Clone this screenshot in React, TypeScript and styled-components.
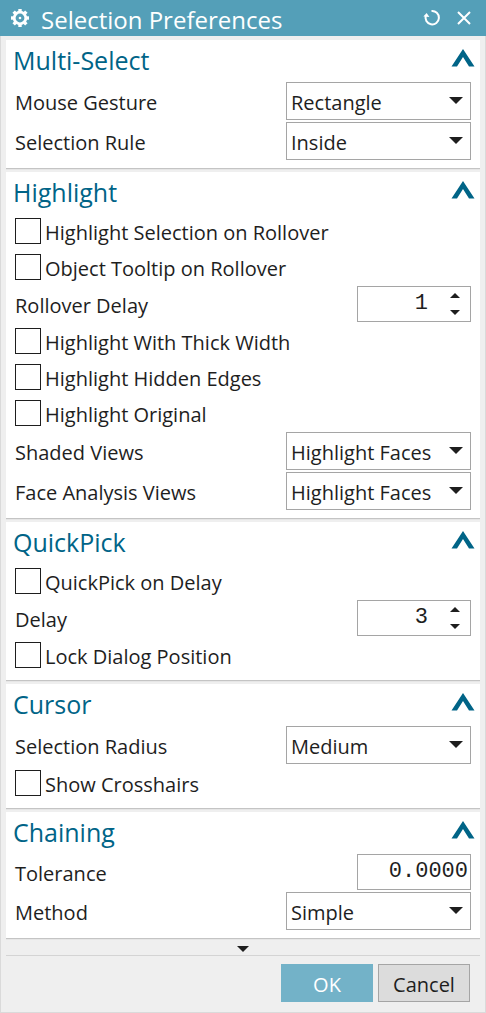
import React, { useId, useState } from "react";
import styled, { createGlobalStyle } from "styled-components";

const GlobalStyle = createGlobalStyle`
  *, *::before, *::after { box-sizing: border-box; }
  body {
    margin: 0;
    background: #efefef;
    color: #1e1e1e;
    font-family: "Open Sans", "Noto Sans", sans-serif;
    font-size: 20px;
  }
  button, input, select { font: inherit; color: inherit; margin: 0; }
`;

const Dialog = styled.main`
  min-height: 100vh;
  background: #efefef;
  display: flex;
  flex-direction: column;
`;

const TitleBar = styled.header`
  display: flex;
  align-items: center;
  height: 36px;
  padding: 0 15px 0 10px;
  background: #549fb8;
  color: #fff;
`;

const Title = styled.h1`
  flex: 1;
  margin: 0;
  padding: 3px 0 0 11px;
  font-size: 24px;
  line-height: 32px;
  font-weight: 400;
  white-space: nowrap;
`;

const IconButton = styled.button`
  display: flex;
  padding: 0;
  border: 0;
  background: none;
  color: inherit;
  & + & { margin-left: 16px; }
`;

const Body = styled.div`
  flex: 1;
  display: flex;
  flex-direction: column;
  padding: 4px 5px 10px;
  border: 1px solid #dadada;
  border-top: 0;
`;

const Sections = styled.div`
  display: flex;
  flex-direction: column;
  gap: 3px;
`;

const Panel = styled.section`
  padding-bottom: 6px;
  background: #fff;
  border-bottom: 1px solid #c4c4c4;
  box-shadow: 0 1px #e6e6e6;
`;

const PanelHead = styled.div`
  display: flex;
  justify-content: space-between;
  align-items: flex-start;
  height: 42px;
  padding: 0 5px 0 7px;
`;

const PanelTitle = styled.h2`
  margin: 0;
  padding-top: 4px;
  color: #006487;
  font-size: 25px;
  line-height: 32px;
  font-weight: 400;
`;

const Collapse = styled.button`
  display: flex;
  margin-top: 9px;
  padding: 0;
  border: 0;
  background: none;
  color: #006487;
`;

const Row = styled.div<{ $height: number }>`
  display: flex;
  justify-content: space-between;
  align-items: flex-start;
  height: ${(p) => p.$height}px;
  padding: 0 9px;
`;

const Label = styled.label`
  align-self: center;
  line-height: 26px;
  padding-top: 2px;
  white-space: nowrap;
`;

const SelectBox = styled.div`
  position: relative;
  width: 185px;
  height: 38px;
`;

const SelectInput = styled.select`
  appearance: none;
  width: 100%;
  height: 100%;
  padding: 3px 30px 0 4px;
  border: 1px solid #a5a5a5;
  border-radius: 0;
  background: #fff;
`;

const SelectArrow = styled.svg`
  position: absolute;
  top: 15px;
  right: 8px;
  pointer-events: none;
`;

const CheckLabel = styled.label`
  display: flex;
  align-items: flex-start;
  gap: 4px;
  padding-top: 4px;
  line-height: 30px;
  white-space: nowrap;
`;

const Check = styled.input`
  appearance: none;
  width: 26px;
  height: 26px;
  border: 1px solid #1e1e1e;
  background: #fff;
  &:checked { background: #549fb8; }
`;

const NumberBox = styled.div`
  display: flex;
  align-items: flex-start;
  width: 114px;
  height: 36px;
  border: 1px solid #a5a5a5;
  background: #fff;
`;

const NumberInput = styled.input`
  flex: 1;
  min-width: 0;
  height: 32px;
  padding: 0 2px;
  border: 0;
  background: none;
  text-align: right;
  font-family: "Liberation Mono", monospace;
  font-size: 22px;
`;

const Steps = styled.div`
  display: flex;
  flex-direction: column;
  align-items: center;
  width: 40px;
  height: 34px;
  padding-left: 9px;
`;

const StepButton = styled.button`
  flex: 1;
  display: flex;
  align-items: center;
  padding: 0;
  border: 0;
  background: none;
`;

const MoreBar = styled.button`
  display: flex;
  justify-content: center;
  height: 17px;
  padding: 7px 0 0;
  border: 0;
  border-bottom: 1px solid #d4d4d4;
  background: none;
`;

const Actions = styled.footer`
  display: flex;
  justify-content: flex-end;
  gap: 5px;
  padding: 8px 10px 0 0;
`;

const Action = styled.button<{ $primary?: boolean }>`
  width: 92px;
  height: 38px;
  padding: 3px 0 0;
  border: 1px solid ${(p) => (p.$primary ? "#73b2c8" : "#a5a5a5")};
  background: ${(p) => (p.$primary ? "#73b2c8" : "#dcdcdc")};
  color: ${(p) => (p.$primary ? "#fff" : "#1e1e1e")};
`;

const teeth = [0, 45, 90, 135, 180, 225, 270, 315];

function GearIcon() {
  return (
    <svg width="20" height="20" viewBox="0 0 20 20" fill="none" stroke="currentColor">
      <circle cx="10" cy="10" r="5.8" strokeWidth="2.8" />
      <circle cx="10" cy="10" r="1.3" fill="currentColor" stroke="none" />
      {teeth.map((a) => (
        <path key={a} d="M10 1v3" strokeWidth="3.4" transform={`rotate(${a} 10 10)`} />
      ))}
    </svg>
  );
}

function ResetIcon() {
  return (
    <svg width="18" height="18" viewBox="0 0 18 18" fill="none" stroke="currentColor" strokeWidth="2">
      <path d="M8.5 2A6.7 6.7 0 1 1 2.9 6.4" />
      <path d="M0.4 7.6L3.6 4L6.4 8z" fill="currentColor" stroke="none" />
    </svg>
  );
}

function CloseIcon() {
  return (
    <svg width="14" height="14" viewBox="0 0 14 14" stroke="currentColor" strokeWidth="2">
      <path d="M1 1l12 12M13 1L1 13" />
    </svg>
  );
}

function Triangle({ w, h, up }: { w: number; h: number; up?: boolean }) {
  return (
    <svg width={w} height={h} viewBox={`0 0 ${w} ${h}`} fill="#1e1e1e">
      <path d={up ? `M0 ${h}L${w / 2} 0L${w} ${h}z` : `M0 0H${w}L${w / 2} ${h}z`} />
    </svg>
  );
}

function Group({ title, children }: { title: string; children: React.ReactNode }) {
  const [open, setOpen] = useState(true);
  return (
    <Panel>
      <PanelHead>
        <PanelTitle>{title}</PanelTitle>
        <Collapse aria-label={`Collapse ${title}`} aria-expanded={open} onClick={() => setOpen(!open)}>
          <svg width="24" height="18" viewBox="0 0 24 18" fill="currentColor">
            <path d="M12 0L23.5 17.5H18L12 8L6 17.5H0.5z" />
          </svg>
        </Collapse>
      </PanelHead>
      {open && children}
    </Panel>
  );
}

function SelectRow({ label, options }: { label: string; options: string[] }) {
  const id = useId();
  return (
    <Row $height={40}>
      <Label htmlFor={id}>{label}</Label>
      <SelectBox>
        <SelectInput id={id}>
          {options.map((o) => (
            <option key={o}>{o}</option>
          ))}
        </SelectInput>
        <SelectArrow width="14" height="8" viewBox="0 0 14 8" fill="#1e1e1e">
          <path d="M0 0H14L7 7z" />
        </SelectArrow>
      </SelectBox>
    </Row>
  );
}

function CheckRow({ label }: { label: string }) {
  return (
    <Row $height={36}>
      <CheckLabel>
        <Check type="checkbox" />
        {label}
      </CheckLabel>
    </Row>
  );
}

function SpinRow({ label, initial }: { label: string; initial: number }) {
  const id = useId();
  const [value, setValue] = useState(initial);
  return (
    <Row $height={38}>
      <Label htmlFor={id}>{label}</Label>
      <NumberBox>
        <NumberInput
          id={id}
          inputMode="numeric"
          value={value}
          onChange={(e) => setValue(Number(e.target.value) || 0)}
        />
        <Steps>
          <StepButton aria-label={`Increase ${label}`} onClick={() => setValue(value + 1)}>
            <Triangle w={10} h={5} up />
          </StepButton>
          <StepButton aria-label={`Decrease ${label}`} onClick={() => setValue(value - 1)}>
            <Triangle w={10} h={5} />
          </StepButton>
        </Steps>
      </NumberBox>
    </Row>
  );
}

function TextRow({ label, initial }: { label: string; initial: string }) {
  const id = useId();
  return (
    <Row $height={38}>
      <Label htmlFor={id}>{label}</Label>
      <NumberBox>
        <NumberInput id={id} inputMode="decimal" defaultValue={initial} />
      </NumberBox>
    </Row>
  );
}

export default function App() {
  return (
    <Dialog>
      <GlobalStyle />
      <TitleBar>
        <GearIcon />
        <Title>Selection Preferences</Title>
        <IconButton aria-label="Reset">
          <ResetIcon />
        </IconButton>
        <IconButton aria-label="Close">
          <CloseIcon />
        </IconButton>
      </TitleBar>
      <Body>
        <Sections>
          <Group title="Multi-Select">
            <SelectRow label="Mouse Gesture" options={["Rectangle", "Lasso", "Circle"]} />
            <SelectRow label="Selection Rule" options={["Inside", "Outside", "Crossing"]} />
          </Group>
          <Group title="Highlight">
            <CheckRow label="Highlight Selection on Rollover" />
            <CheckRow label="Object Tooltip on Rollover" />
            <SpinRow label="Rollover Delay" initial={1} />
            <CheckRow label="Highlight With Thick Width" />
            <CheckRow label="Highlight Hidden Edges" />
            <CheckRow label="Highlight Original" />
            <SelectRow label="Shaded Views" options={["Highlight Faces", "Highlight Edges"]} />
            <SelectRow label="Face Analysis Views" options={["Highlight Faces", "Highlight Edges"]} />
          </Group>
          <Group title="QuickPick">
            <CheckRow label="QuickPick on Delay" />
            <SpinRow label="Delay" initial={3} />
            <CheckRow label="Lock Dialog Position" />
          </Group>
          <Group title="Cursor">
            <SelectRow label="Selection Radius" options={["Medium", "Small", "Large"]} />
            <CheckRow label="Show Crosshairs" />
          </Group>
          <Group title="Chaining">
            <TextRow label="Tolerance" initial="0.0000" />
            <SelectRow label="Method" options={["Simple", "WCS"]} />
          </Group>
        </Sections>
        <MoreBar aria-label="Show more">
          <Triangle w={12} h={6} />
        </MoreBar>
        <Actions>
          <Action $primary>OK</Action>
          <Action>Cancel</Action>
        </Actions>
      </Body>
    </Dialog>
  );
}
